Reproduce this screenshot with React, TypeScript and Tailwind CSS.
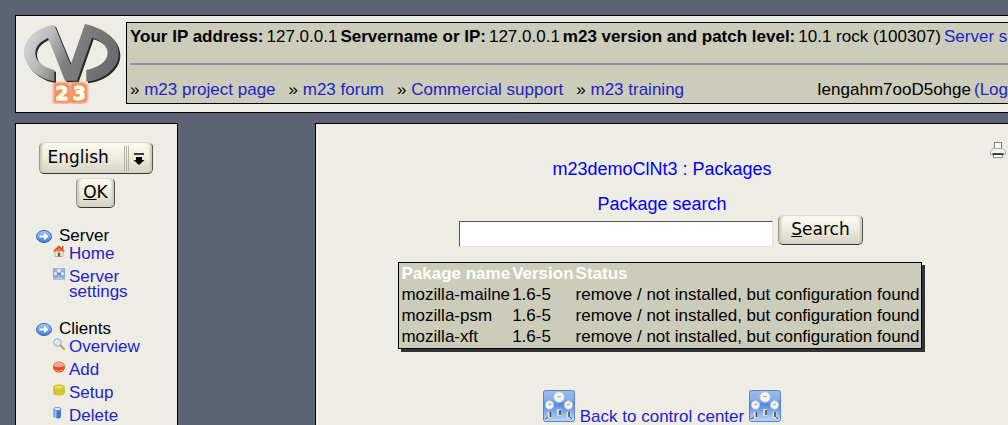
import React from "react";

const link = "text-[#2323c8]";
const bevel =
  "rounded-[5px] border border-[#55554f] border-t-[#dedbcd] border-l-[#9a988c] border-b-[#33332f] bg-linear-to-b from-[#fcfbf0] via-[#edebdf] to-[#d6d3c5] shadow-[inset_3px_0_2px_-1px_#cbc8bb,inset_-3px_0_2px_-1px_#cbc8bb] font-['DejaVu_Sans',sans-serif] text-[17px] leading-5 text-black";

function Logo() {
  const shape =
    "M118 27 C78 31 27 60 27 108 C27 152 72 190 118 196 L118 162 C86 154 61 138 61 112 C61 90 78 75 99 66 L150 194 L186 194 L231 65 C260 74 278 90 278 111 C278 138 248 155 214 162 L214 197 C262 192 311 160 311 113 C311 62 256 34 210 24 L167 146 Z";
  return (
    <svg viewBox="24 18 297 246" className="h-[82px] w-[99px]" role="img" aria-label="m23">
      <defs>
        <linearGradient id="metal" x1="0" y1="0.1" x2="1" y2="0.4">
          <stop offset="0" stopColor="#dadada" />
          <stop offset="0.3" stopColor="#b9b9b9" />
          <stop offset="0.55" stopColor="#808080" />
          <stop offset="1" stopColor="#6c6c6c" />
        </linearGradient>
        <filter id="glow" x="-40%" y="-40%" width="180%" height="180%">
          <feMorphology in="SourceAlpha" operator="dilate" radius="8" result="wide" />
          <feGaussianBlur in="wide" stdDeviation="3" result="soft" />
          <feFlood floodColor="#fb8468" />
          <feComposite in2="soft" operator="in" result="halo" />
          <feMorphology in="SourceAlpha" operator="dilate" radius="4" result="edge" />
          <feFlood floodColor="#eda021" />
          <feComposite in2="edge" operator="in" result="rim" />
          <feMerge>
            <feMergeNode in="halo" />
            <feMergeNode in="rim" />
            <feMergeNode in="SourceGraphic" />
          </feMerge>
        </filter>
      </defs>
      <path d={shape} fill="#292929" transform="translate(5 5)" />
      <path d={shape} fill="url(#metal)" />
      <g
        fontFamily="DejaVu Sans, sans-serif"
        fontWeight="700"
        fontSize="56"
        textAnchor="middle"
        fill="#fffaf0"
        stroke="#fffaf0"
        strokeWidth="3"
        filter="url(#glow)"
      >
        <text x="141" y="253">2</text>
        <text x="193" y="253">3</text>
      </g>
    </svg>
  );
}

function ArrowIcon() {
  return (
    <svg viewBox="0 0 16 13" className="h-[13px] w-4 shrink-0">
      <defs>
        <linearGradient id="arrow" x1="0" y1="0" x2="0" y2="1">
          <stop offset="0" stopColor="#a9ccf8" />
          <stop offset="1" stopColor="#3b7be0" />
        </linearGradient>
      </defs>
      <ellipse cx="8" cy="6.5" rx="7.5" ry="6" fill="url(#arrow)" stroke="#3567bd" />
      <path d="M3.5 5.5h4.5v-2.7l4.5 3.7-4.5 3.7v-2.7h-4.5z" fill="#fff" />
    </svg>
  );
}

function ControlIcon({ className }: { className: string }) {
  return (
    <svg viewBox="0 0 32 32" className={className}>
      <defs>
        <linearGradient id="panel" x1="0" y1="0" x2="0" y2="1">
          <stop offset="0" stopColor="#9dbdea" />
          <stop offset="0.3" stopColor="#86aee8" />
          <stop offset="0.45" stopColor="#4f8be4" />
          <stop offset="1" stopColor="#c0d8f8" />
        </linearGradient>
      </defs>
      <rect x="0.5" y="0.5" width="31" height="31" rx="2" fill="url(#panel)" stroke="#5c84c0" />
      <g fill="#f7f7f2" stroke="#c3c6c9" strokeWidth="0.8">
        <circle cx="16" cy="7" r="5.2" />
        <circle cx="6.5" cy="15" r="4.2" />
        <circle cx="25.5" cy="15" r="4.2" />
      </g>
      <path d="M14 6l2 1 2-1M5 14l2 1 1-2M24 14l1 1 2-1" stroke="#888" strokeWidth="0.8" fill="none" />
      <path d="M6.5 22v6M16 19v7M25.500 22v6" stroke="#dcdcd6" strokeWidth="4" />
      <path d="M7.500 22v5M17 20v5M26 22v5" stroke="#4a4a4a" strokeWidth="1.600" />
      <path d="M2 29l3-2M27 27l2 2" stroke="#555" />
    </svg>
  );
}

function HomeIcon() {
  return (
    <svg viewBox="0 0 12 12" className="size-3">
      <path d="M2 6h8v5.500h-8z" fill="#eeeade" stroke="#a8a497" strokeWidth="0.7" />
      <path d="M4.800 7.500h2.400v4h-2.400z" fill="#6d5a4c" />
      <path d="M9 1h1.500v3h-1.500z" fill="#a55" />
      <path d="M0.800 6.300l5.200-5 5.200 5" fill="#f3793f" stroke="#dd4a24" strokeWidth="1.5" />
    </svg>
  );
}

function SearchIcon() {
  return (
    <svg viewBox="0 0 12 12" className="size-3">
      <path d="M7.500 7.500l3.500 3.500" stroke="#d69a4b" strokeWidth="2" strokeLinecap="round" />
      <circle cx="4.500" cy="4.500" r="3.800" fill="#cfe8f8" stroke="#98aebb" />
      <path d="M2.500 4.500q0-2 2-2" stroke="#fff" fill="none" />
    </svg>
  );
}

function AddIcon() {
  return (
    <svg viewBox="0 0 12 12" className="size-3">
      <ellipse cx="6" cy="6" rx="6" ry="5.500" fill="#ee4a22" />
      <path d="M0.500 5q5.500 2.500 11 0q-1-4-5.500-4t-5.500 4z" fill="#f2a48c" />
      <path d="M2 9q4 2.500 8 0" stroke="#ff9c70" fill="none" />
    </svg>
  );
}

function SetupIcon() {
  return (
    <svg viewBox="0 0 12 12" className="size-3">
      <rect y="0.500" width="12" height="11" rx="4" fill="#d2c82d" />
      <path d="M2 2h8q1 3-4 3t-4-3z" fill="#e3dc74" />
    </svg>
  );
}

function DeleteIcon() {
  return (
    <svg viewBox="0 0 12 12" className="size-3">
      <path d="M0.500 2v8q3.500 2.500 7.500 0.500v-8.500z" fill="#3d78d2" />
      <path d="M2.500 3v8" stroke="#a8cbf5" strokeWidth="2" />
      <ellipse cx="4.300" cy="2" rx="3.700" ry="1.500" fill="#e7eef8" stroke="#4474b8" strokeWidth="0.7" />
    </svg>
  );
}

function PrinterIcon() {
  return (
    <svg viewBox="0 0 16 16" className="size-4">
      <path d="M4.500 6v-5.500h7v5.500" fill="#fbfbfb" stroke="#777" />
      <path d="M3 6.500h10l2.500 3v3h-15v-3z" fill="#f3f3f1" stroke="#999" strokeWidth="0.8" />
      <path d="M2.500 12h11" stroke="#111" strokeWidth="1.500" />
      <path d="M3.500 13v2.500h9v-2.500" fill="#fff" stroke="#888" />
    </svg>
  );
}

type Item = { label: string; icon: React.ReactNode };

function MenuGroup({ title, items }: { title: string; items: Item[] }) {
  return (
    <section>
      <h2 className="flex h-4 items-center gap-[7px]">
        <ArrowIcon />
        {title}
      </h2>
      <ul className="flex flex-col gap-2 pl-[17px]">
        {items.map((item) => (
          <li key={item.label}>
            <a href="#" className={`flex gap-1 leading-[15px] ${link}`}>
              <span className="shrink-0 pt-px">{item.icon}</span>
              <span className="-mb-0.5 pt-0.5">{item.label}</span>
            </a>
          </li>
        ))}
      </ul>
    </section>
  );
}

const packages = ["mozilla-mailne", "mozilla-psm", "mozilla-xft"];
const projectLinks = ["m23 project page", "m23 forum", "Commercial support", "m23 training"];

export default function App() {
  return (
    <div className="flex h-screen flex-col gap-2.5 overflow-hidden bg-[#5b6375] pt-[15px] pl-[15px] font-['Liberation_Sans',sans-serif] text-[17px] leading-5 text-black">
      <header className="flex shrink-0 gap-1 border border-r-0 border-black bg-[#eeede5] pt-1.5 pb-2 pl-[7px]">
        <Logo />
        <div className="min-w-0 flex-1 overflow-hidden border border-r-0 border-black bg-[#ccccba] pt-1 pb-[3px] pl-[3px] whitespace-nowrap">
          <p className="flex gap-[3px]">
            <b>Your IP address:</b>
            <span>127.0.0.1</span>
            <b>Servername or IP:</b>
            <span>127.0.0.1</span>
            <b>m23 version and patch level:</b>
            <span>10.1 rock (100307)</span>
            <a href="#" className={link}>Server s</a>
          </p>
          <hr className="mt-4 mb-[15px] border-t-2 border-t-[#92929a]" />
          <div className="flex justify-between">
            <nav className="flex gap-[13px]">
              {projectLinks.map((label) => (
                <span key={label}>
                  » <a href="#" className={link}>{label}</a>
                </span>
              ))}
            </nav>
            <span className="flex gap-[3px]">
              <span>Iengahm7ooD5ohge</span>
              <a href="#" className={link}>(Log</a>
            </span>
          </div>
        </div>
      </header>

      <div className="flex min-h-0 flex-1 gap-[137px]">
        <aside className="w-[163px] shrink-0 overflow-hidden border border-b-0 border-black bg-[#eeede5] pt-[18px]">
          <form className="flex flex-col items-center gap-1 pr-0.5">
            <div className="relative">
              <select aria-label="Language" className={`h-8 w-[114px] appearance-none pb-0.5 pl-2 ${bevel}`}>
                <option>English</option>
              </select>
              <svg viewBox="0 0 26 26" className="pointer-events-none absolute top-1 right-1 size-[26px]">
                <path d="M1.500 0v25M3.500 0v25M5.500 0v25" stroke="#b7b4a7" />
                <path d="M11 8h10" stroke="#000" strokeWidth="1.500" />
                <path d="M13 11h6v3h2.500l-5.500 5-5.500-5h2.500z" />
              </svg>
            </div>
            <button type="button" className={`h-[30px] w-[39px] pb-0.5 ${bevel}`}>
              <u>O</u>K
            </button>
          </form>
          <div className="flex flex-col gap-6 pt-5 pl-5">
            <MenuGroup
              title="Server"
              items={[
                { label: "Home", icon: <HomeIcon /> },
                { label: "Server settings", icon: <ControlIcon className="size-3" /> },
              ]}
            />
            <MenuGroup
              title="Clients"
              items={[
                { label: "Overview", icon: <SearchIcon /> },
                { label: "Add", icon: <AddIcon /> },
                { label: "Setup", icon: <SetupIcon /> },
                { label: "Delete", icon: <DeleteIcon /> },
              ]}
            />
          </div>
        </aside>

        <main className="flex min-w-0 flex-1 flex-col items-center overflow-hidden border border-r-0 border-b-0 border-black bg-[#eeede5] pt-[18px]">
          <a href="#" aria-label="Print" className="mr-0.5 self-end">
            <PrinterIcon />
          </a>
          <h1 className="mt-px text-[18px] text-[#0000f5]">m23demoClNt3 : Packages</h1>
          <label htmlFor="search" className="mt-[15px] text-[18px] text-[#0000f5]">
            Package search
          </label>
          <form className="mt-px mr-0.5 flex items-end gap-[5px]">
            <input
              id="search"
              type="text"
              className="h-[26px] w-[314px] border border-[#e2e2e2] border-t-[#55554f] border-l-[#55554f] bg-white px-1"
            />
            <button type="button" className={`mb-0.5 h-[30px] w-[85px] pb-0.5 ${bevel}`}>
              <u>S</u>earch
            </button>
          </form>
          <table className="mt-[15px] mr-1 border-separate border-spacing-px border border-black bg-[#ccccba] text-left whitespace-nowrap shadow-[3px_3px_0_#333]">
            <thead>
              <tr className="text-white">
                <th className="pl-px">Pakage name</th>
                <th className="pl-px">Version</th>
                <th className="pl-px">Status</th>
              </tr>
            </thead>
            <tbody>
              {packages.map((name) => (
                <tr key={name}>
                  <td className="pl-px">{name}</td>
                  <td className="pl-px">1.6-5</td>
                  <td className="pl-px">remove / not installed, but configuration found</td>
                </tr>
              ))}
            </tbody>
          </table>
          <a href="#" className={`mt-[41px] flex shrink-0 items-end gap-[5px] ${link}`}>
            <ControlIcon className="size-8" />
            <span className="-mb-[5px]">Back to control center</span>
            <ControlIcon className="size-8" />
          </a>
        </main>
      </div>
    </div>
  );
}
